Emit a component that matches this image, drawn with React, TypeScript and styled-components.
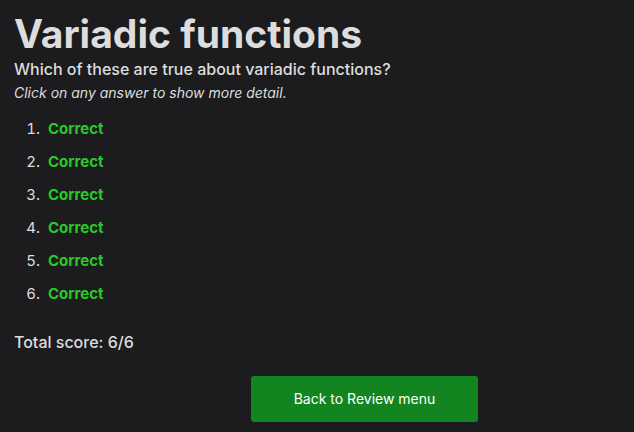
import React from "react";
import styled, { createGlobalStyle } from "styled-components";

const GlobalStyle = createGlobalStyle`
  * { box-sizing: border-box; }
  body {
    margin: 0;
    background: #1c1c1e;
    color: #dddddd;
    font-family: Inter, "Liberation Sans", sans-serif;
  }
`;

const Page = styled.main`
  padding: 10px 14px;
`;

const Title = styled.h1`
  margin: 0;
  font-size: 39px;
  line-height: 48px;
  font-weight: 700;
`;

const Question = styled.h2`
  margin: 0;
  font-size: 16px;
  line-height: 22px;
  font-weight: 500;
`;

const Hint = styled.p`
  margin: 0;
  font-size: 14px;
  line-height: 26px;
  font-style: italic;
`;

const Answers = styled.ol`
  margin: 6px 0 0;
  padding: 0 0 0 30px;
`;

const Answer = styled.li`
  font-size: 15px;
  line-height: 33px;
`;

const Verdict = styled.button`
  border: 0;
  padding: 0 4px;
  background: none;
  color: #28c928;
  font: inherit;
  font-weight: 700;
  cursor: pointer;
`;

const Score = styled.p`
  margin: 20px 0 22px;
  font-size: 16px;
  line-height: 24px;
  font-weight: 500;
`;

const Actions = styled.div`
  display: flex;
  justify-content: center;
  padding-left: 95px;
`;

const BackButton = styled.button`
  border: 0;
  border-radius: 3px;
  padding: 12px 43px;
  background: #128521;
  color: #ffffff;
  font: inherit;
  font-size: 14px;
  line-height: 22px;
  cursor: pointer;
`;

const answers = [1, 2, 3, 4, 5, 6];

export default function App() {
  return (
    <>
      <GlobalStyle />
      <Page>
        <Title>Variadic functions</Title>
        <Question>Which of these are true about variadic functions?</Question>
        <Hint>Click on any answer to show more detail.</Hint>
        <Answers>
          {answers.map((id) => (
            <Answer key={id}>
              <Verdict type="button">Correct</Verdict>
            </Answer>
          ))}
        </Answers>
        <Score>Total score: 6/6</Score>
        <Actions>
          <BackButton type="button">Back to Review menu</BackButton>
        </Actions>
      </Page>
    </>
  );
}
